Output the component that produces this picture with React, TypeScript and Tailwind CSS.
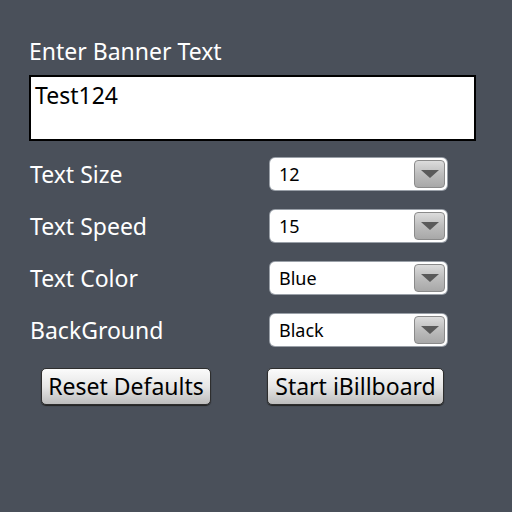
import React from "react";

const rows = [
  { label: "Text Size", value: "12" },
  { label: "Text Speed", value: "15" },
  { label: "Text Color", value: "Blue" },
  { label: "BackGround", value: "Black" },
];

function Spinner({ value }: { value: string }) {
  return (
    <div className="flex h-[32px] w-[177px] items-center rounded-[5px] bg-white pl-[9px] pr-[2px] shadow-[0_0_0_1px_#9aa0a8]">
      <span className="flex-1 text-[18px] leading-none text-black">{value}</span>
      <span className="flex h-[28px] w-[31px] items-center justify-center rounded-[4px] border border-[#8a8a8a] bg-gradient-to-b from-[#dcdcdc] via-[#bdbdbd] to-[#a8a8a8]">
        <svg width="20" height="10" viewBox="0 0 20 10">
          <polygon points="1,1 19,1 10,9" fill="#5a5a5a" />
        </svg>
      </span>
    </div>
  );
}

function Button({ children, className }: { children: React.ReactNode; className: string }) {
  return (
    <button
      className={`flex h-[37px] items-center justify-center rounded-[5px] border border-[#2e2e2e] bg-gradient-to-b from-[#fbfbfb] via-[#e6e6e6] to-[#bdbdbd] text-[23px] leading-none text-black shadow-[0_1px_1px_#222] ${className}`}
    >
      {children}
    </button>
  );
}

export default function App() {
  return (
    <div
      className="min-h-[512px] w-[512px] bg-[#4a505a] pl-[29px] pr-[36px] pt-[37px]"
      style={{ fontFamily: '"Noto Sans", "DejaVu Sans", sans-serif' }}
    >
      <div className="text-[23px] leading-[28px] text-white">Enter Banner Text</div>
      <div className="mt-[10px] h-[66px] border-2 border-black bg-white px-[4px] pt-[4px] text-[23px] leading-[28px] text-black">
        Test124
      </div>
      <div className="mt-[17px] flex flex-col gap-[20px]">
        {rows.map((r) => (
          <div key={r.label} className="flex items-center">
            <span className="w-[241px] pl-[1px] text-[23px] leading-none text-white">{r.label}</span>
            <Spinner value={r.value} />
          </div>
        ))}
      </div>
      <div className="mt-[22px] flex pl-[12px]">
        <Button className="w-[170px]">Reset Defaults</Button>
        <Button className="ml-[56px] w-[177px]">Start iBillboard</Button>
      </div>
    </div>
  );
}
